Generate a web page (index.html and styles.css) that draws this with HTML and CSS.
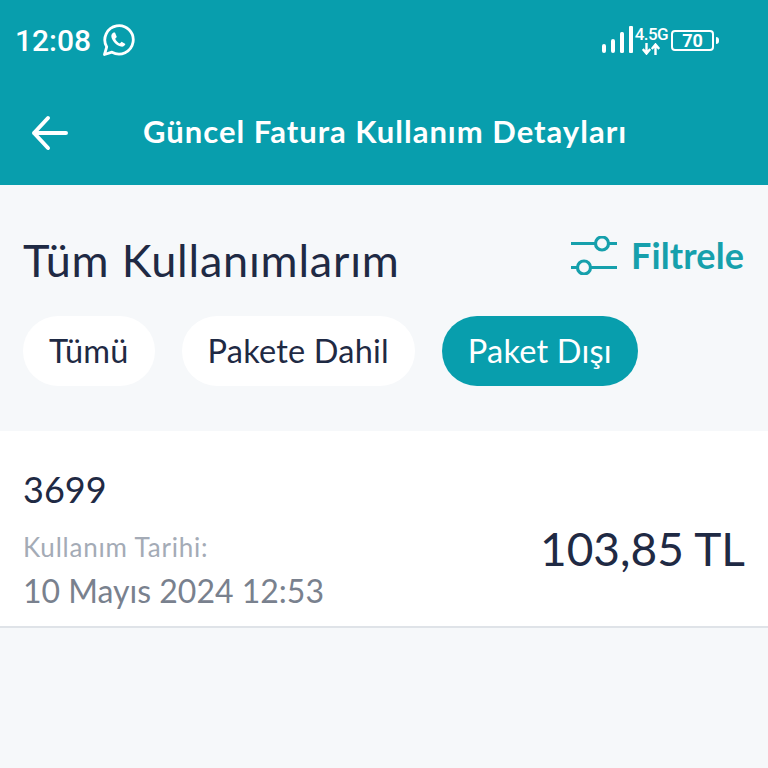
FILE: index.html
```html
<!DOCTYPE html>
<html lang="tr">
<head>
<meta charset="UTF-8">
<meta name="viewport" content="width=device-width, initial-scale=1.0">
<title>Güncel Fatura Kullanım Detayları</title>
<link rel="stylesheet" href="styles.css">
</head>
<body>
<header class="top">
  <div class="status">
    <span class="time">12:08</span>
    <svg class="wa" width="34" height="34" viewBox="0 0 34 34" fill="none">
      <path d="M3.500 31.500l2.200-7.600A14.200 14.200 0 1 1 11 29.200z" stroke="#fff" stroke-width="2.800" stroke-linejoin="round"/>
      <path d="M12.600 9.600c-1.500.6-2.600 2.300-2.200 4.500.8 4 5 8.600 9.600 9.500 2.200.4 4-.7 4.400-2.500l-3.800-2.300-1.800 1.700c-1.900-.7-3.900-2.700-4.600-4.700l1.600-1.800-1.800-4.400z" fill="#fff"/>
    </svg>
    <div class="indicators">
      <svg width="31" height="28" viewBox="0 0 31 28" fill="#fff">
        <rect x="0" y="18" width="4" height="9" rx="2"/>
        <rect x="9" y="13" width="4" height="14" rx="2"/>
        <rect x="18" y="6" width="4" height="21" rx="1.500"/>
        <rect x="27" y="0" width="4" height="27" rx="1"/>
      </svg>
      <div class="net">
        <span class="net-label">4.5G</span>
        <svg width="18" height="12" viewBox="0 0 18 12" fill="none" stroke="#fff" stroke-width="2.400">
          <path d="M4.500 0v10M.8 6L4.500 10.500 8.200 6"/>
          <path d="M13.500 12V2M9.800 6l3.700-4.500L17.200 6"/>
        </svg>
      </div>
      <div class="battery"><span>70</span></div>
      <span class="battery-tip"></span>
    </div>
  </div>
  <div class="appbar">
    <svg class="back" width="38" height="36" viewBox="0 0 38 36" fill="none" stroke="#fff" stroke-width="4" stroke-linecap="round" stroke-linejoin="round">
      <path d="M35 18H3M17 3L3 18l14 15"/>
    </svg>
    <h1>Güncel Fatura Kullanım Detayları</h1>
  </div>
</header>

<main class="content">
  <div class="title-row">
    <h2>Tüm Kullanımlarım</h2>
    <div class="filter">
      <svg width="46" height="39" viewBox="0 0 46 39" fill="none" stroke="#16a0ac" stroke-width="3.200">
        <path d="M0 7.500h24.500M37.500 7.500H46M0 31.500h6.500M19.500 31.500H46"/>
        <circle cx="31" cy="7.500" r="6.500"/>
        <circle cx="13" cy="31.500" r="6.500"/>
      </svg>
      <span>Filtrele</span>
    </div>
  </div>
  <div class="tabs">
    <span class="tab">Tümü</span>
    <span class="tab">Pakete Dahil</span>
    <span class="tab active">Paket Dışı</span>
  </div>
  <section class="usage">
    <div class="usage-info">
      <div class="usage-no">3699</div>
      <div class="usage-label">Kullanım Tarihi:</div>
      <div class="usage-date">10 Mayıs 2024 12:53</div>
    </div>
    <div class="usage-price">103,85 TL</div>
  </section>
</main>
</body>
</html>
```

FILE: styles.css
```css
body {
  margin: 0;
  background: #f6f8fa;
  font-family: 'Lato', 'Noto Sans', sans-serif;
  color: #1f2a44;
}

.top {
  height: 185px;
  background: #089ead;
  color: #fff;
}
.status {
  display: flex;
  align-items: center;
  height: 80px;
  padding: 0 49px 0 15px;
}
.time {
  font-family: 'Roboto', sans-serif;
  font-size: 30px;
  font-weight: 500;
  margin-right: 10px;
}
.indicators {
  margin-left: auto;
  display: flex;
  align-items: center;
  gap: 2px;
}
.net {
  display: flex;
  flex-direction: column;
  align-items: center;
  margin-right: 1px;
}
.net-label {
  font-family: 'Roboto', sans-serif;
  font-size: 17px;
  font-weight: 500;
  line-height: 17px;
  letter-spacing: -0.6px;
}
.battery {
  width: 39px;
  height: 17px;
  border: 2px solid #fff;
  border-radius: 4px;
  display: flex;
  align-items: center;
  justify-content: center;
  font-family: 'Roboto', sans-serif;
  font-size: 18px;
  font-weight: 700;
}
.battery-tip {
  width: 3px;
  height: 7px;
  background: #fff;
  border-radius: 0 3px 3px 0;
}
.appbar {
  display: flex;
  align-items: center;
  height: 105px;
  padding-left: 31px;
}
.back {
  margin-right: 74px;
}
.appbar h1 {
  margin: 0 0 4px;
  font-size: 31px;
  font-weight: 700;
  letter-spacing: 1px;
}

.title-row {
  display: flex;
  justify-content: space-between;
  align-items: flex-start;
  padding: 48px 24px 0 23px;
}
.title-row h2 {
  margin: 0;
  font-size: 45px;
  line-height: 54px;
  font-weight: 400;
  letter-spacing: 0.8px;
}
.filter {
  display: flex;
  align-items: center;
  gap: 14px;
  color: #16a0ac;
  font-size: 36px;
  font-weight: 700;
  letter-spacing: 0.1px;
}
.tabs {
  display: flex;
  gap: 27px;
  padding: 29px 24px 45px 23px;
}
.tab {
  height: 70px;
  line-height: 70px;
  padding: 0 26px;
  border-radius: 35px;
  background: #fff;
  font-size: 32.5px;
  letter-spacing: 0.2px;
}
.tab.active {
  background: #089ead;
  color: #fff;
}
.usage {
  display: flex;
  justify-content: space-between;
  align-items: center;
  height: 197px;
  box-sizing: border-box;
  padding: 24px 23px 0;
  background: #fff;
  border-bottom: 2px solid #dfe3e8;
}
.usage-no {
  font-size: 36px;
  line-height: 44px;
  margin-bottom: 19px;
}
.usage-label {
  font-size: 26px;
  line-height: 34px;
  letter-spacing: 0.8px;
  color: #a4abb6;
}
.usage-date {
  font-size: 32px;
  line-height: 48px;
  margin-top: 3px;
  color: #79818e;
}
.usage-price {
  font-size: 46px;
  margin-top: 16px;
}
```
